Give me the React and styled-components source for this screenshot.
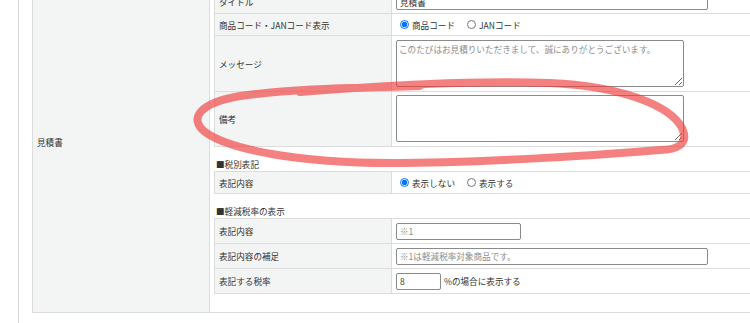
import React from 'react';
import styled, { createGlobalStyle } from 'styled-components';

const GlobalStyle = createGlobalStyle`
    html, body {
        margin: 0;
        padding: 0;
        background: #fff;
        overflow: hidden;
    }
    body {
        font-family: "Noto Sans CJK JP", "Noto Sans", sans-serif;
        font-size: 8.6px;
        color: #333;
    }
`;

const Page = styled.div`
    position: relative;
    width: 800px;
    height: 323px;
    padding-left: 18px;
    box-sizing: border-box;
    overflow: hidden;
`;

const Panel = styled.div`
    display: flow-root;
    height: 100%;
    border-left: 1px solid #d6d6d6;
    padding-left: 13px;
`;

const OuterRow = styled.div`
    display: flex;
    margin-top: -30px;
    border: 1px solid #dcdcdc;
    border-right: none;
`;

const OuterHead = styled.div`
    width: 177px;
    flex: none;
    display: flex;
    align-items: center;
    padding-left: 4px;
    box-sizing: border-box;
    background: #f3f4f4;
    border-right: 1px solid #dcdcdc;
`;

const OuterBody = styled.div`
    flex: 1;
    padding: 18px 0 18px 4px;
`;

const FormTable = styled.div`
    border-top: 1px solid #dcdcdc;
    border-left: 1px solid #dcdcdc;
`;

const Row = styled.div`
    display: grid;
    grid-template-columns: 177px 1fr;
    min-height: ${p => p.$h || 22}px;
`;

const Label = styled.div`
    display: flex;
    align-items: center;
    padding-left: 4px;
    background: #f3f4f4;
    border-right: 1px solid #dcdcdc;
    border-bottom: 1px solid #dcdcdc;
`;

const Value = styled.div`
    display: flex;
    align-items: ${p => (p.$top ? 'flex-start' : 'center')};
    padding: ${p => p.$pad || '0'} 4px;
    border-bottom: 1px solid #dcdcdc;
`;

const SectionTitle = styled.div`
    margin: 11px 0 1px;
    padding-left: 2px;
    line-height: 12px;
    height: 12px;
`;

const TextInput = styled.input`
    width: ${p => p.$w}px;
    height: 17px;
    box-sizing: border-box;
    margin: 0;
    padding: 0 3px;
    border: 1px solid #8a8a8a;
    border-radius: 2px;
    font: inherit;
    color: #333;
    outline: none;
    &::placeholder {
        color: #8c8c8c;
    }
`;

const TextArea = styled.textarea`
    display: block;
    width: 288px;
    height: 47px;
    box-sizing: border-box;
    margin: 0;
    padding: 2px;
    border: 1px solid #8a8a8a;
    border-radius: 2px;
    font: inherit;
    color: #333;
    outline: none;
    resize: both;
    &::placeholder {
        color: #8c8c8c;
    }
`;

const RadioGroup = styled.div`
    display: flex;
    align-items: center;
`;

const RadioLabel = styled.label`
    display: flex;
    align-items: center;
    margin-right: 8px;
`;

const Radio = styled.input.attrs({ type: 'radio' })`
    width: 9px;
    height: 9px;
    margin: 0 3px 0 4px;
    accent-color: #0075ff;
`;

const Suffix = styled.span`
    margin-left: 3px;
`;

const Annotation = styled.svg`
    position: absolute;
    left: 0;
    top: 0;
    pointer-events: none;
`;

const RadioChoice = ({ name, options, selected }) => (
    <RadioGroup>
        {options.map((o, i) => (
            <RadioLabel key={o}>
                <Radio name={name} defaultChecked={i === selected} />
                {o}
            </RadioLabel>
        ))}
    </RadioGroup>
);

export default function App() {
    return (
        <>
            <GlobalStyle />
            <Page>
                <Panel>
                    <OuterRow>
                        <OuterHead>見積書</OuterHead>
                        <OuterBody>
                            <FormTable>
                                <Row $h={24}>
                                    <Label>タイトル</Label>
                                    <Value>
                                        <TextInput $w={312} defaultValue="見積書" />
                                    </Value>
                                </Row>
                                <Row>
                                    <Label>商品コード・JANコード表示</Label>
                                    <Value>
                                        <RadioChoice name="code" options={['商品コード', 'JANコード']} selected={0} />
                                    </Value>
                                </Row>
                                <Row $h={55}>
                                    <Label>メッセージ</Label>
                                    <Value $top $pad="4px">
                                        <TextArea placeholder="このたびはお見積りいただきまして、誠にありがとうございます。" />
                                    </Value>
                                </Row>
                                <Row $h={55}>
                                    <Label>備考</Label>
                                    <Value $top $pad="3px">
                                        <TextArea />
                                    </Value>
                                </Row>
                            </FormTable>

                            <SectionTitle>■税別表記</SectionTitle>
                            <FormTable>
                                <Row>
                                    <Label>表記内容</Label>
                                    <Value>
                                        <RadioChoice name="tax" options={['表示しない', '表示する']} selected={0} />
                                    </Value>
                                </Row>
                            </FormTable>

                            <SectionTitle>■軽減税率の表示</SectionTitle>
                            <FormTable>
                                <Row $h={25}>
                                    <Label>表記内容</Label>
                                    <Value>
                                        <TextInput $w={125} placeholder="※1" />
                                    </Value>
                                </Row>
                                <Row $h={25}>
                                    <Label>表記内容の補足</Label>
                                    <Value>
                                        <TextInput $w={312} placeholder="※1は軽減税率対象商品です。" />
                                    </Value>
                                </Row>
                                <Row $h={25}>
                                    <Label>表記する税率</Label>
                                    <Value>
                                        <TextInput $w={45} defaultValue="8" />
                                        <Suffix>%の場合に表示する</Suffix>
                                    </Value>
                                </Row>
                            </FormTable>
                        </OuterBody>
                    </OuterRow>
                </Panel>
                <Annotation width="750" height="323" viewBox="0 0 750 323">
                    <path
                        d="M 300 92 C 380 86, 470 80, 550 83 C 620 86, 670 105, 682 128 C 690 145, 675 150, 660 150 C 600 155, 480 163, 390 163 C 300 163, 230 150, 205 132 C 188 118, 200 103, 240 96 C 300 88, 360 88, 420 86"
                        fill="none"
                        stroke="rgb(240, 60, 60)"
                        strokeOpacity="0.65"
                        strokeWidth="8"
                        strokeLinecap="round"
                        strokeLinejoin="round"
                    />
                </Annotation>
            </Page>
        </>
    );
}
